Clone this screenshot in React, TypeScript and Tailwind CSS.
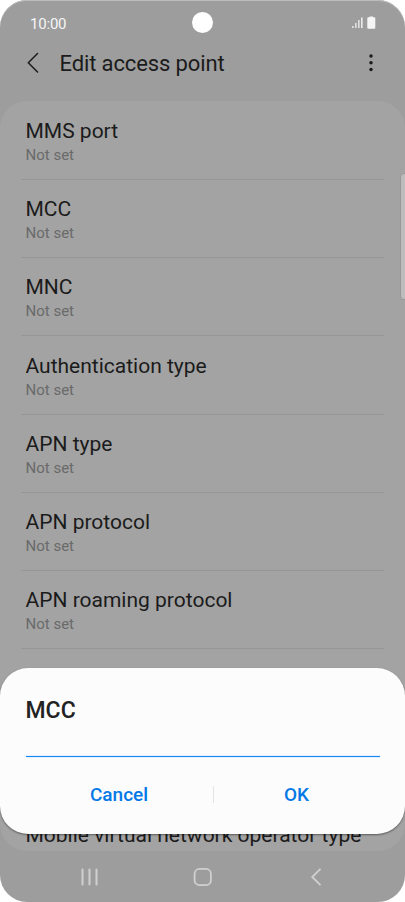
import React from 'react';

interface Setting {
  title: string;
  value: string;
}

const settings: Setting[] = [
  { title: 'MMS port', value: 'Not set' },
  { title: 'MCC', value: 'Not set' },
  { title: 'MNC', value: 'Not set' },
  { title: 'Authentication type', value: 'Not set' },
  { title: 'APN type', value: 'Not set' },
  { title: 'APN protocol', value: 'Not set' },
  { title: 'APN roaming protocol', value: 'Not set' },
];

const StatusBar: React.FC = () => (
  <div className="relative flex h-[46px] shrink-0 items-center justify-between pl-[30px] pr-[29px] text-[#f5f5f5]">
    <span className="pt-[2px] text-[15px] leading-[18px] tracking-[-0.2px]">10:00</span>
    <div className="absolute left-[191.5px] top-[12px] h-[21px] w-[21px] rounded-full bg-white" />
    <svg width="24" height="14" viewBox="0 0 24 14" fill="currentColor">
      <rect x="0" y="10" width="1.6" height="2" opacity="0.75" />
      <rect x="3" y="7" width="1.6" height="5" opacity="0.75" />
      <rect x="6" y="4" width="1.6" height="8" opacity="0.75" />
      <rect x="9" y="1.5" width="1.6" height="10.5" opacity="0.9" />
      <path d="M15.3 2.3q0-1 1-1h1.3V.4h3.4v.9h1.3q1 0 1 1v9.5q0 1-1 1h-6q-1 0-1-1z" />
    </svg>
  </div>
);

const Header: React.FC = () => (
  <header className="flex h-[54.5px] shrink-0 items-start pl-[27px] pr-[30px] text-[#1b1b1b]">
    <button className="mt-[6px]">
      <svg width="12" height="21" viewBox="0 0 12 21" fill="none" stroke="currentColor" strokeWidth="1.5" strokeLinecap="round" strokeLinejoin="round">
        <path d="M10.5 1.5L1.3 10.7L10.5 20" />
      </svg>
    </button>
    <h1 className="ml-[20.5px] mt-[4px] flex-1 text-[22px] leading-[28px] tracking-[-0.12px]">Edit access point</h1>
    <button className="mt-[8px]">
      <svg width="8" height="18" viewBox="0 0 8 18" fill="currentColor">
        <circle cx="4" cy="2.1" r="1.75" />
        <circle cx="4" cy="8.8" r="1.75" />
        <circle cx="4" cy="15.4" r="1.75" />
      </svg>
    </button>
  </header>
);

const SettingRow: React.FC<Setting> = ({ title, value }) => (
  <div className="mx-[21px] h-[78.2px] shrink-0 border-b border-[#969696] pl-[4.5px] pt-[16.1px]">
    <p className="text-[21px] leading-[26px] text-[#1b1b1b]">{title}</p>
    <p className="mt-[2px] text-[15px] leading-[18px] text-[#6a6a6a]">{value}</p>
  </div>
);

const NavBar: React.FC = () => (
  <nav className="flex h-[51px] shrink-0 items-center pl-[80px] text-[#d0d0d0]">
    <svg width="19" height="20" viewBox="0 0 19 20" stroke="currentColor" strokeWidth="2" strokeLinecap="round">
      <path d="M2.5 2.5V17.5M9.5 2.5V17.5M16.5 2.5V17.5" />
    </svg>
    <svg className="ml-[93px]" width="20" height="20" viewBox="0 0 20 20" fill="none" stroke="currentColor" strokeWidth="1.8">
      <rect x="2.6" y="1.9" width="16.3" height="16.3" rx="5" />
    </svg>
    <svg className="ml-[98px]" width="12" height="20" viewBox="0 0 12 20" fill="none" stroke="currentColor" strokeWidth="1.8">
      <path d="M10.5 1.8L2.2 10L10.5 18.2" />
    </svg>
  </nav>
);

const EditDialog: React.FC = () => (
  <div className="absolute left-0 top-[668px] h-[166px] w-full rounded-[28px] bg-[#fcfcfc] px-[25.5px] pt-[29px] shadow-[0_1px_2px_rgba(0,0,0,0.45)]">
    <h2 className="text-[23px] font-medium leading-[28px] text-[#222222]">MCC</h2>
    <div className="mt-[31px] h-px bg-[#1489fa] shadow-[0_0_1px_#1489fa]" />
    <div className="mt-[25px] flex items-center text-[19px] font-medium leading-[26px] text-[#0478e6]">
      <button className="w-[187px] text-center">Cancel</button>
      <span className="mb-[2px] h-[17px] w-px bg-[#e4e4e4]" />
      <button className="flex-1 text-center">OK</button>
    </div>
  </div>
);

const App: React.FC = () => {
  return (
    <div className="h-[902px] w-[405px] bg-white font-['Roboto',sans-serif]">
      <div className="relative flex h-full flex-col overflow-hidden rounded-[27px] bg-[#9d9d9d] shadow-[inset_0_1px_0_#bdbdbd]">
        <StatusBar />
        <Header />
        <main className="flex h-[750.5px] shrink-0 flex-col overflow-hidden rounded-[27px] bg-[#a3a3a3] pt-[1.4px]">
          {settings.map((s) => (
            <SettingRow key={s.title} title={s.title} value={s.value} />
          ))}
          <div className="h-[156.4px] shrink-0" />
          <SettingRow title="Mobile virtual network operator type" value="" />
        </main>
        <NavBar />
        {/* scroll handle */}
        <div className="absolute -right-[4px] top-[173px] h-[127px] w-[9px] rounded-[4px] border border-[#989898] bg-[#bcbcbc]" />
        <EditDialog />
      </div>
    </div>
  );
};

export default App;
